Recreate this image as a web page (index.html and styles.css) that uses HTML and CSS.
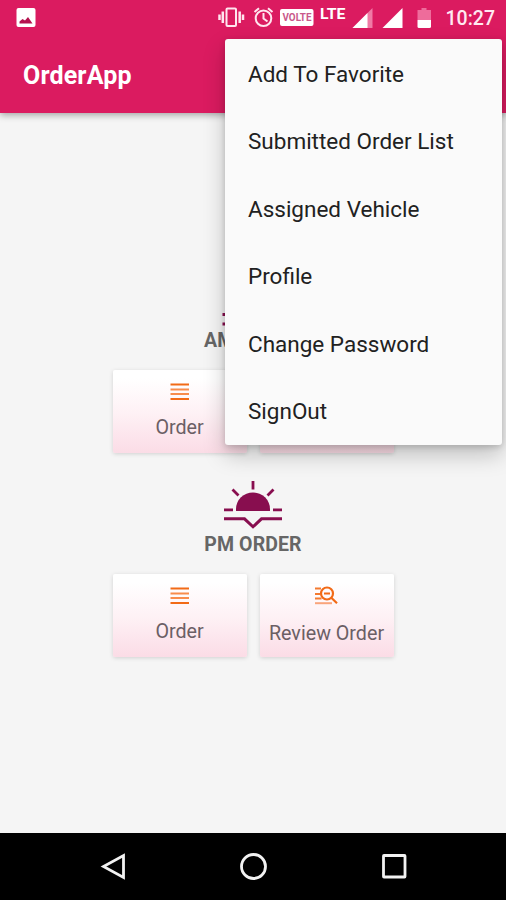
FILE: index.html
```html
<!DOCTYPE html>
<html lang="en">
<head>
<meta charset="utf-8">
<title>OrderApp</title>
<link rel="stylesheet" href="styles.css">
</head>
<body>
<div class="screen">
  <header class="top">
    <div class="status">
      <svg class="status-icons" width="506" height="36" viewBox="0 0 506 36">
        <rect x="16.500" y="8" width="19" height="19" rx="2" fill="#fff"/>
        <path d="M19.500 23.500v-2l3-2.500 2.500 1.500 3-3.500 4.500 6.500z" fill="#b5124f"/>
        <g stroke="#ffe6ef" fill="none" stroke-width="2">
          <rect x="226.500" y="8.500" width="9.500" height="17.500" rx="1"/>
          <path stroke-width="2.500" d="M222.800 11.500v11.500M219.500 14.500v5.500M239.700 11.500v11.500M243 14.500v5.500"/>
          <circle cx="263.500" cy="18.200" r="7.800"/>
          <path d="M263.500 13v5.500l4 3M254.500 12l4.500-3.800M272.500 12l-4.500-3.800"/>
        </g>
        <rect x="280" y="9" width="33.500" height="17" rx="2" fill="#fff"/>
        <text class="volte" x="282.500" y="21" textLength="29" lengthAdjust="spacingAndGlyphs">VOLTE</text>
        <text class="lte" x="320" y="18.500" textLength="25.500" lengthAdjust="spacingAndGlyphs">LTE</text>
        <path d="M372.500 8v20h-20z" fill="#f07aa5"/>
        <path d="M367.500 13v15h-15z" fill="#fff"/>
        <path d="M402.500 8v20h-20z" fill="#fff"/>
        <path d="M417.500 20V10h4V8h5v2h4.500v10z" fill="#ee6c9b"/>
        <path d="M417.500 20H431v6.500q0 1.500-1.500 1.500h-10.500q-1.500 0-1.500-1.500z" fill="#fff"/>
      </svg>
      <span class="clock">10:27</span>
    </div>
    <h1 class="title">OrderApp</h1>
  </header>

  <main class="content">
    <section class="group">
      <svg class="sun" width="62" height="50" viewBox="-1 0 62 50">
        <path d="M13 36a17 17 0 0 1 34 0z" fill="#880e4f"/>
        <path d="M-.5 37.500h10.500M50 37.500h10.500M-.5 47h20.500l10-8 10 8h20.500M30 7v9M9 16l6 6M51 16l-6 6" stroke="#880e4f" stroke-width="3" fill="none"/>
      </svg>
      <h2 class="label">AM ORDER</h2>
      <div class="cards">
        <button class="card">
          <svg width="24" height="24" viewBox="0 0 24 24"><path d="M2.500 4.500H21M2.500 19H21" stroke="#f26a16" stroke-width="2"/><path d="M2.500 9.500H21M2.500 14H21" stroke="#f88c4c" stroke-width="2"/></svg>
          <span>Order</span>
        </button>
        <button class="card review">
          <svg width="24" height="24" viewBox="0 0 24 24"><path d="M1 4.500h5M1 10h4M1 14h5" stroke="#f26a16" stroke-width="2"/><circle cx="13.500" cy="10" r="6" fill="none" stroke="#f26a16" stroke-width="2"/></svg>
          <span>Review Order</span>
        </button>
      </div>
    </section>

    <section class="group">
      <svg class="sun" width="62" height="50" viewBox="-1 0 62 50">
        <path d="M13 30v-2a17 16.500 0 0 1 34 0v2z" fill="#880e4f"/>
        <path d="M1 28.800h9M50 28.800h9M30-.5v9M9.500 8.500l6 6M50.500 8.500l-6 6" stroke="#880e4f" stroke-width="2.800" fill="none"/>
        <path d="M1 37.800h20.500l8.500 8 8.500-8H59" stroke="#880e4f" stroke-width="3" fill="none"/>
      </svg>
      <h2 class="label">PM ORDER</h2>
      <div class="cards">
        <button class="card">
          <svg width="24" height="24" viewBox="0 0 24 24"><path d="M2.500 4.500H21M2.500 19H21" stroke="#f26a16" stroke-width="2"/><path d="M2.500 9.500H21M2.500 14H21" stroke="#f88c4c" stroke-width="2"/></svg>
          <span>Order</span>
        </button>
        <button class="card review">
          <svg width="24" height="24" viewBox="0 0 24 24"><path d="M0 4.500h6M0 10h5M0 14.500h6.500" stroke="#f47a30" stroke-width="1.800"/><path d="M0 19.200h17" stroke="#f9a47b" stroke-width="2"/><circle cx="12" cy="9.500" r="6" fill="none" stroke="#f26a16" stroke-width="2.200"/><path d="M9 9.500h6M16.300 13.800l5.700 5.500" stroke="#f26a16" stroke-width="2.200"/></svg>
          <span>Review Order</span>
        </button>
      </div>
    </section>
  </main>

  <nav class="navbar">
    <svg width="30" height="30" viewBox="0 0 30 30"><path d="M24.500 3.500v22L4.500 14.500z"/></svg>
    <svg width="30" height="30" viewBox="0 0 30 30"><circle cx="14.500" cy="14.500" r="12"/></svg>
    <svg width="30" height="30" viewBox="0 0 30 30"><rect x="4.500" y="3.500" width="21.500" height="21.500" rx=".5"/></svg>
  </nav>

  <ul class="menu">
    <li>Add To Favorite</li>
    <li>Submitted Order List</li>
    <li>Assigned Vehicle</li>
    <li>Profile</li>
    <li>Change Password</li>
    <li>SignOut</li>
  </ul>
</div>
</body>
</html>
```

FILE: styles.css
```css
* { box-sizing: border-box; }

body {
  margin: 0;
  font-family: Roboto, "Liberation Sans", sans-serif;
}

.screen {
  position: relative;
  display: flex;
  flex-direction: column;
  width: 506px;
  height: 900px;
  overflow: hidden;
  background: #f5f5f5;
}

.top {
  position: relative;
  height: 113px;
  background: #db1b60;
  box-shadow: 0 2px 7px rgba(0, 0, 0, .35);
}

.status {
  position: relative;
  display: flex;
  justify-content: flex-end;
  align-items: center;
  height: 36px;
  padding-right: 11px;
}

.status-icons {
  position: absolute;
  left: 0;
  top: 0;
}

.volte {
  font-size: 10.500px;
  font-weight: 700;
  fill: #c9588a;
}

.lte {
  font-size: 14.500px;
  font-weight: 700;
  fill: #fff;
}

.clock {
  color: #ffeaf1;
  font-size: 19.500px;
  font-weight: 500;
}

.title {
  margin: 25px 0 0 23px;
  color: #fff;
  font-size: 25px;
  font-weight: 700;
  line-height: 30px;
  letter-spacing: .15px;
}

.content {
  flex: 1;
  display: flex;
  flex-direction: column;
  align-items: center;
  gap: 27px;
  padding-top: 164px;
}

.group {
  display: flex;
  flex-direction: column;
  align-items: center;
  height: 177px;
}

.sun { display: block; }

.label {
  margin: 2px 0 17px;
  color: #666;
  font-size: 19.500px;
  font-weight: 700;
  line-height: 24px;
  letter-spacing: .1px;
}

.cards {
  display: flex;
  gap: 13px;
}

.card {
  display: flex;
  flex-direction: column;
  align-items: center;
  width: 134px;
  height: 83px;
  padding: 10px 0 0;
  border: 0;
  border-radius: 2px;
  background: linear-gradient(#fff 10%, #fef1f5 52%, #fbdce6);
  box-shadow: 0 1px 4px rgba(0, 0, 0, .15);
  color: #6b5f65;
  font-family: inherit;
  font-size: 19.700px;
  line-height: 24px;
  white-space: nowrap;
}

.card span { margin-top: 12px; }

.card.review span { margin-top: 14px; }

.navbar {
  display: flex;
  justify-content: space-between;
  height: 67px;
  padding: 19px 97px 0 99px;
  background: #000;
}

.navbar svg {
  fill: none;
  stroke: #f2f2f2;
  stroke-width: 2.800;
}

.menu {
  position: absolute;
  left: 225px;
  top: 39px;
  width: 276.500px;
  margin: 0;
  padding: 1px 0 0;
  list-style: none;
  border-radius: 3px;
  background: #fafafa;
  box-shadow: 0 10px 22px rgba(0, 0, 0, .22), 0 2px 6px rgba(0, 0, 0, .16);
}

.menu li {
  display: flex;
  align-items: center;
  height: 67.500px;
  padding-left: 23px;
  color: #212121;
  font-size: 22.500px;
}
```
